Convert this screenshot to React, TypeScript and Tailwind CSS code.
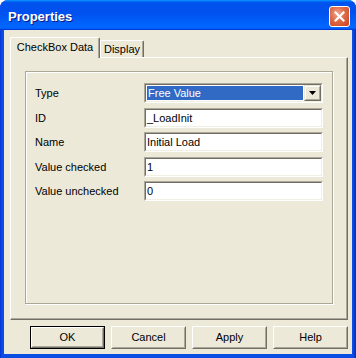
import React from "react";

function Sunken({ children, className = "" }: { children?: React.ReactNode; className?: string }) {
  return (
    <div className={`border border-t-[#ACA899] border-l-[#ACA899] border-b-white border-r-white ${className}`}>
      <div className="h-full border border-t-[#716F64] border-l-[#716F64] border-b-[#F1EFE2] border-r-[#F1EFE2] bg-white">
        {children}
      </div>
    </div>
  );
}

function TextField({ value, mt }: { value: string; mt: string }) {
  return (
    <Sunken className={`w-[179px] h-[20px] ${mt}`}>
      <div className="pl-[1px] leading-[16px] text-[11px] text-black whitespace-nowrap">{value}</div>
    </Sunken>
  );
}

function Btn({ label, def = false }: { label: string; def?: boolean }) {
  const inner = (
    <div className="w-full h-full border border-t-white border-l-white border-b-[#716F64] border-r-[#716F64]">
      <div className="w-full h-full border border-t-[#ECE9D8] border-l-[#ECE9D8] border-b-[#ACA899] border-r-[#ACA899] flex items-center justify-center text-[11px] text-black">
        {label}
      </div>
    </div>
  );
  return def ? (
    <div className="w-[75px] h-[23px] border border-black bg-[#ECE9D8]">{inner}</div>
  ) : (
    <div className="w-[75px] h-[23px] bg-[#ECE9D8]">{inner}</div>
  );
}

export default function App() {
  const rows: { label: string; mt: string }[] = [
    { label: "Type", mt: "" },
    { label: "ID", mt: "mt-[5px]" },
    { label: "Name", mt: "mt-[4px]" },
    { label: "Value checked", mt: "mt-[5px]" },
    { label: "Value unchecked", mt: "mt-[4px]" },
  ];
  const values = ["", "_LoadInit", "Initial Load", "1", "0"];
  return (
    <div className="w-[356px] h-[358px] bg-white [font-family:'Liberation_Sans',Arial,sans-serif]">
      <div className="w-full h-full rounded-t-[8px] overflow-hidden flex flex-col bg-[linear-gradient(to_right,#0831D9,#0A4EE4_2px,#0A4EE4_calc(100%-3px),#0728B8)]">
        {/* Title bar */}
        <div className="h-[30px] shrink-0 flex items-center justify-between bg-[linear-gradient(180deg,#0997ff,#0053ee_8%,#0050ee_40%,#0066ff_88%,#0066ff_93%,#005bff_95%,#003dd7_96%,#003dd7)]">
          <div className="pl-[8px] pt-[3px] text-[13px] font-bold text-white [text-shadow:1px_1px_0_#0A1883]">
            Properties
          </div>
          <div className="mr-[6px] mt-[2px] w-[21px] h-[21px] rounded-[3px] border border-white bg-[radial-gradient(circle_at_40%_35%,#F0A890,#DE6A47_45%,#C8411C)] flex items-center justify-center">
            <svg width="11" height="11" viewBox="0 0 11 11">
              <path d="M1.5 1.5 L9.5 9.5 M9.5 1.5 L1.5 9.5" stroke="white" strokeWidth="2.2" strokeLinecap="square" />
            </svg>
          </div>
        </div>
        {/* Client */}
        <div className="flex-1 mx-[4px] mb-[4px] bg-[#ECE9D8] flex flex-col pt-[7px]">
          {/* Tab strip */}
          <div className="ml-[6px] h-[21px] -mb-[1px] flex items-end relative z-10">
            <div className="w-[90px] h-[21px] bg-[#ECE9D8] rounded-tl-[2px] rounded-tr-[2px] border-l border-t border-r border-l-white border-t-white border-r-[#716F64] shadow-[inset_-1px_0_0_#ACA899] flex items-center justify-center text-[11px] text-black pb-[1px]">
              CheckBox Data
            </div>
            <div className="w-[44px] h-[17px] mb-[1px] bg-[#ECE9D8] rounded-tr-[2px] border-l border-t border-r border-l-white border-t-white border-r-[#716F64] shadow-[inset_-1px_0_0_#ACA899] flex items-center justify-center text-[11px] text-black">
              Display
            </div>
          </div>
          {/* Panel */}
          <div className="ml-[6px] w-[338px] h-[263px] border border-l-white border-t-white border-r-[#716F64] border-b-[#716F64] shadow-[inset_-1px_-1px_0_#ACA899]">
            <div className="ml-[14px] mt-[13px] w-[308px] h-[233px] border border-[#ACA899] shadow-[inset_1px_1px_0_white,1px_1px_0_white] pt-[11px] pl-[9px] flex flex-col">
              {rows.map((r, i) => (
                <div key={r.label} className={`flex items-center ${r.mt}`}>
                  <div className="w-[109px] text-[11px] text-black">{r.label}</div>
                  {i === 0 ? (
                    <Sunken className="w-[179px] h-[20px]">
                      <div className="flex h-full">
                        <div className="flex-1 p-[1px]">
                          <div className="h-full bg-[#316AC5] text-white text-[11px] leading-[14px] pl-[1px]">Free Value</div>
                        </div>
                        <div className="w-[17px] h-full bg-[#ECE9D8] border border-t-[#ECE9D8] border-l-[#ECE9D8] border-b-[#716F64] border-r-[#716F64]">
                          <div className="w-full h-full border border-t-white border-l-white border-b-[#ACA899] border-r-[#ACA899] flex items-center justify-center">
                            <svg width="7" height="4" viewBox="0 0 7 4">
                              <polygon points="0,0 7,0 3.5,4" fill="black" />
                            </svg>
                          </div>
                        </div>
                      </div>
                    </Sunken>
                  ) : (
                    <TextField value={values[i]} mt="" />
                  )}
                </div>
              ))}
            </div>
          </div>
          {/* Buttons */}
          <div className="mt-[6px] ml-[26px] flex gap-[6px]">
            <Btn label="OK" def />
            <Btn label="Cancel" />
            <Btn label="Apply" />
            <Btn label="Help" />
          </div>
        </div>
      </div>
    </div>
  );
}
